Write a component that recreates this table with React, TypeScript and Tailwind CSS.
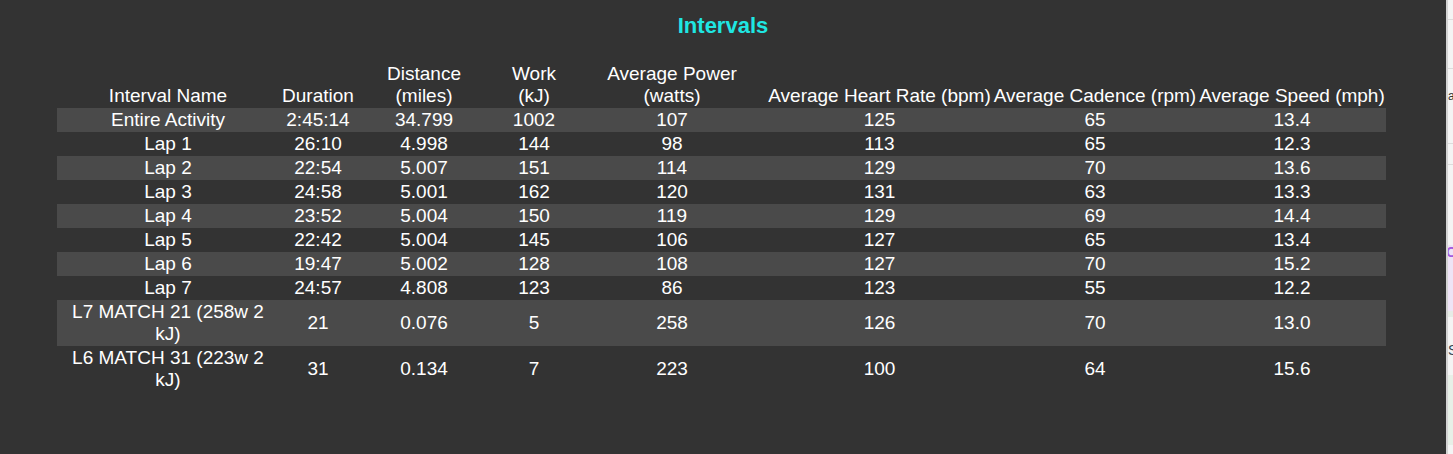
const headers: { label: string[]; w: string }[] = [
  { label: ["Interval Name"], w: "w-[222px]" },
  { label: ["Duration"], w: "w-[78px]" },
  { label: ["Distance", "(miles)"], w: "w-[134px]" },
  { label: ["Work", "(kJ)"], w: "w-[86px]" },
  { label: ["Average Power", "(watts)"], w: "w-[190px]" },
  { label: ["Average Heart Rate (bpm)"], w: "w-[225px]" },
  { label: ["Average Cadence (rpm)"], w: "w-[206px]" },
  { label: ["Average Speed (mph)"], w: "w-[188px]" },
];

const rows: string[][] = [
  ["Entire Activity", "2:45:14", "34.799", "1002", "107", "125", "65", "13.4"],
  ["Lap 1", "26:10", "4.998", "144", "98", "113", "65", "12.3"],
  ["Lap 2", "22:54", "5.007", "151", "114", "129", "70", "13.6"],
  ["Lap 3", "24:58", "5.001", "162", "120", "131", "63", "13.3"],
  ["Lap 4", "23:52", "5.004", "150", "119", "129", "69", "14.4"],
  ["Lap 5", "22:42", "5.004", "145", "106", "127", "65", "13.4"],
  ["Lap 6", "19:47", "5.002", "128", "108", "127", "70", "15.2"],
  ["Lap 7", "24:57", "4.808", "123", "86", "123", "55", "12.2"],
  ["L7 MATCH 21 (258w 2 kJ)", "21", "0.076", "5", "258", "126", "70", "13.0"],
  ["L6 MATCH 31 (223w 2 kJ)", "31", "0.134", "7", "223", "100", "64", "15.6"],
];

function IntervalsTable() {
  return (
    <div className="flex-1 bg-[#333333] pt-[13px]">
      <h2 className="text-center text-[22px] font-bold leading-[26px] text-[#1fe6e2]">
        Intervals
      </h2>
      <table className="mt-[23px] ml-[57px] table-fixed border-collapse text-[19px] leading-[22px] text-white">
        <thead>
          <tr>
            {headers.map(h => (
              <th
                key={h.label.join(" ")}
                className={`${h.w} px-0 py-px align-bottom font-normal whitespace-nowrap`}
              >
                {h.label.map(l => (
                  <div key={l}>{l}</div>
                ))}
              </th>
            ))}
          </tr>
        </thead>
        <tbody>
          {rows.map((r, i) => (
            <tr key={r[0]} className={i % 2 === 0 ? "bg-[#4a4a4a]" : "bg-[#333333]"}>
              {r.map((c, j) => (
                <td
                  key={j}
                  className={`py-px text-center align-middle ${j === 0 ? "px-[12px]" : "px-0"}`}
                >
                  {c}
                </td>
              ))}
            </tr>
          ))}
        </tbody>
      </table>
    </div>
  );
}

function SidePeek() {
  return (
    <div className="relative w-[7px] overflow-hidden border-l-2 border-[#d4d4d4] bg-[#f4f4f4]">
      <div className="mt-[19px] h-px bg-[#dcdcdc]" />
      <div className="mt-[48px] h-px bg-[#dcdcdc]" />
      <div className="mt-[20px] text-[12px] leading-[14px] text-[#333]">ac</div>
      <div className="mt-[40px] h-px bg-[#dcdcdc]" />
      <div className="mt-[20px] h-px bg-[#dcdcdc]" />
      <div className="mt-[80px] h-[66px] bg-[#eee4f6]">
        <div className="-ml-[2px] text-[14px] font-bold leading-[14px] text-[#a45be0]">O</div>
      </div>
      <div className="h-[6px] bg-[#e6ece6]" />
      <div className="mt-[26px] text-[14px] leading-[14px] text-[#345]">S</div>
      <div className="mt-[18px] h-[70px] bg-[#e7efe7]" />
    </div>
  );
}

export default function App() {
  return (
    <div
      className="flex h-[454px] w-[1453px] overflow-hidden"
      style={{ fontFamily: '"Liberation Sans", Arial, sans-serif' }}
    >
      <IntervalsTable />
      <SidePeek />
    </div>
  );
}
